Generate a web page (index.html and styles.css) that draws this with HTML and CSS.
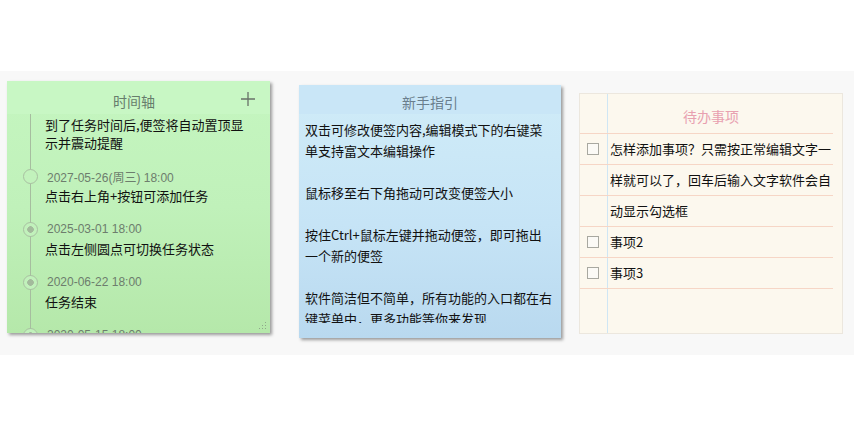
FILE: index.html
```html
<!DOCTYPE html>
<html lang="zh-CN">
<head>
<meta charset="utf-8">
<title>便签</title>
<link rel="stylesheet" href="styles.css">
</head>
<body>
<div class="band">
  <div class="note note-green">
    <div class="green-head">
      <span class="green-title">时间轴</span>
      <svg class="plus" width="14" height="14" viewBox="0 0 14 14"><path d="M7 0V14M0 7H14" stroke="#687268" stroke-width="1.3" fill="none"/></svg>
    </div>
    <div class="timeline">
      <div class="tl-item tl-first">
        <div class="tl-text">到了任务时间后,便签将自动置顶显示并震动提醒</div>
      </div>
      <div class="tl-item">
        <div class="tl-date"><span class="dot"></span><span>2027-05-26(周三) 18:00</span></div>
        <div class="tl-text">点击右上角+按钮可添加任务</div>
      </div>
      <div class="tl-item">
        <div class="tl-date"><span class="dot done"></span><span>2025-03-01 18:00</span></div>
        <div class="tl-text">点击左侧圆点可切换任务状态</div>
      </div>
      <div class="tl-item">
        <div class="tl-date"><span class="dot done"></span><span>2020-06-22 18:00</span></div>
        <div class="tl-text">任务结束</div>
      </div>
      <div class="tl-item">
        <div class="tl-date"><span class="dot done"></span><span>2020-05-15 18:00</span></div>
        <div class="tl-text">开始使用</div>
      </div>
    </div>
    <svg class="grip" width="9" height="9" viewBox="0 0 9 9"><g fill="#8fa88a"><rect x="7" y="1" width="1" height="1"/><rect x="4" y="4" width="1" height="1"/><rect x="7" y="4" width="1" height="1"/><rect x="1" y="7" width="1" height="1"/><rect x="4" y="7" width="1" height="1"/><rect x="7" y="7" width="1" height="1"/></g></svg>
  </div>

  <div class="note note-blue">
    <div class="blue-head">新手指引</div>
    <div class="blue-body">
      <p>双击可修改便签内容,编辑模式下的右键菜单支持富文本编辑操作</p>
      <p>鼠标移至右下角拖动可改变便签大小</p>
      <p>按住Ctrl+鼠标左键并拖动便签，即可拖出一个新的便签</p>
      <p>软件简洁但不简单，所有功能的入口都在右键菜单中，更多功能等你来发现</p>
    </div>
  </div>

  <div class="todo">
    <div class="todo-head">待办事项</div>
    <div class="todo-list">
      <div class="todo-item"><div class="check-cell"><span class="box"></span></div><div class="todo-text">怎样添加事项？只需按正常编辑文字一样就可以了，回车后输入文字软件会自动显示勾选框</div></div>
      <div class="todo-item"><div class="check-cell"><span class="box"></span></div><div class="todo-text">事项2</div></div>
      <div class="todo-item"><div class="check-cell"><span class="box"></span></div><div class="todo-text">事项3</div></div>
    </div>
  </div>
</div>
</body>
</html>
```
FILE: styles.css
```css
* { box-sizing: border-box; }
html, body { margin: 0; padding: 0; background: #ffffff; }
body { font-family: "Noto Sans CJK SC", "Liberation Sans", sans-serif; color: #111; font-size: 13px; }

.band {
  margin-top: 71px;
  height: 284px;
  background: #f8f8f8;
  display: flex;
  align-items: flex-start;
  padding-left: 7px;
}

.note {
  position: relative;
  display: flex;
  flex-direction: column;
  box-shadow: 2px 2px 3px rgba(0,0,0,0.38);
  overflow: hidden;
}

/* green timeline note */
.note-green {
  width: 263px;
  height: 252px;
  margin-top: 10px;
  background: linear-gradient(to bottom, #c5f6c0 0%, #c0f1ba 50%, #b5e8aa 100%);
}
.green-head {
  height: 33px;
  flex: none;
  display: flex;
  align-items: flex-start;
  padding: 8px 15px 0 20px;
  background: #c8f7c4;
}
.green-title {
  flex: 1;
  text-align: center;
  font-size: 14px;
  line-height: 24px;
  color: #677d6c;
}
.plus { margin-top: 3px; }
.timeline {
  flex: 1;
  overflow: hidden;
  background: linear-gradient(to right, transparent 23px, #a6bd9f 23px, #a6bd9f 24px, transparent 24px);
}
.tl-item { padding-bottom: 15px; }
.tl-first { padding-top: 2px; }
.tl-date {
  height: 18px;
  display: flex;
  align-items: center;
  font-family: "Liberation Sans", "Noto Sans CJK SC", sans-serif;
  font-size: 12px;
  color: #6d7d6d;
}
.dot {
  width: 15px;
  height: 15px;
  border-radius: 50%;
  border: 1px solid #a9c0a2;
  background: #c2f2bc;
  margin-left: 16px;
  margin-right: 9px;
  flex: none;
}
.dot.done {
  background: radial-gradient(circle, #a3ba9c 0, #a3ba9c 3px, #c1f1bb 3.6px);
}
.tl-text {
  margin-top: 2px;
  padding-left: 38px;
  width: 243px;
  line-height: 18px;
  color: #111;
}
.tl-first .tl-text { margin-top: 0; }
.grip { position: absolute; right: 3px; bottom: 3px; }

/* blue guide note */
.note-blue {
  width: 262px;
  height: 253px;
  margin-top: 14px;
  margin-left: 29px;
  background: linear-gradient(to bottom, #d0ecf8 0%, #c6e4f6 55%, #b9d9ef 100%);
}
.blue-head {
  flex: none;
  height: 29px;
  padding-top: 6px;
  line-height: 22px;
  text-align: center;
  font-size: 14px;
  color: #6a7e8d;
  background: #c9e6f7;
}
.blue-body {
  flex: 1;
  overflow: hidden;
  margin-bottom: 15px;
  padding: 5px 0 0 6px;
}
.blue-body p {
  margin: 0 0 21px;
  width: 249px;
  line-height: 21px;
  color: #111;
}

/* todo note */
.todo {
  width: 264px;
  height: 241px;
  margin-top: 22px;
  margin-left: 18px;
  border: 1px solid #ece7de;
  background: linear-gradient(to right, transparent 27px, #cfe6f4 27px, #cfe6f4 28px, transparent 28px), #fcf8ee;
}
.todo-head {
  height: 39px;
  padding-top: 5px;
  line-height: 34px;
  text-align: center;
  font-size: 14px;
  color: #e8a0b0;
}
.todo-list {
  margin-right: 9px;
  padding-bottom: 1px;
  background: repeating-linear-gradient(to bottom, #f6d6c6 0, #f6d6c6 1px, transparent 1px, transparent 31px);
}
.todo-item { display: flex; }
.check-cell {
  width: 28px;
  height: 31px;
  flex: none;
  display: flex;
  align-items: center;
  padding-left: 7px;
  padding-top: 1px;
}
.box {
  width: 12px;
  height: 12px;
  border: 1px solid #a8a8a0;
  background: #fbfaf6;
}
.todo-text {
  flex: 1;
  padding-left: 2px;
  line-height: 31px;
  color: #111;
}
```
